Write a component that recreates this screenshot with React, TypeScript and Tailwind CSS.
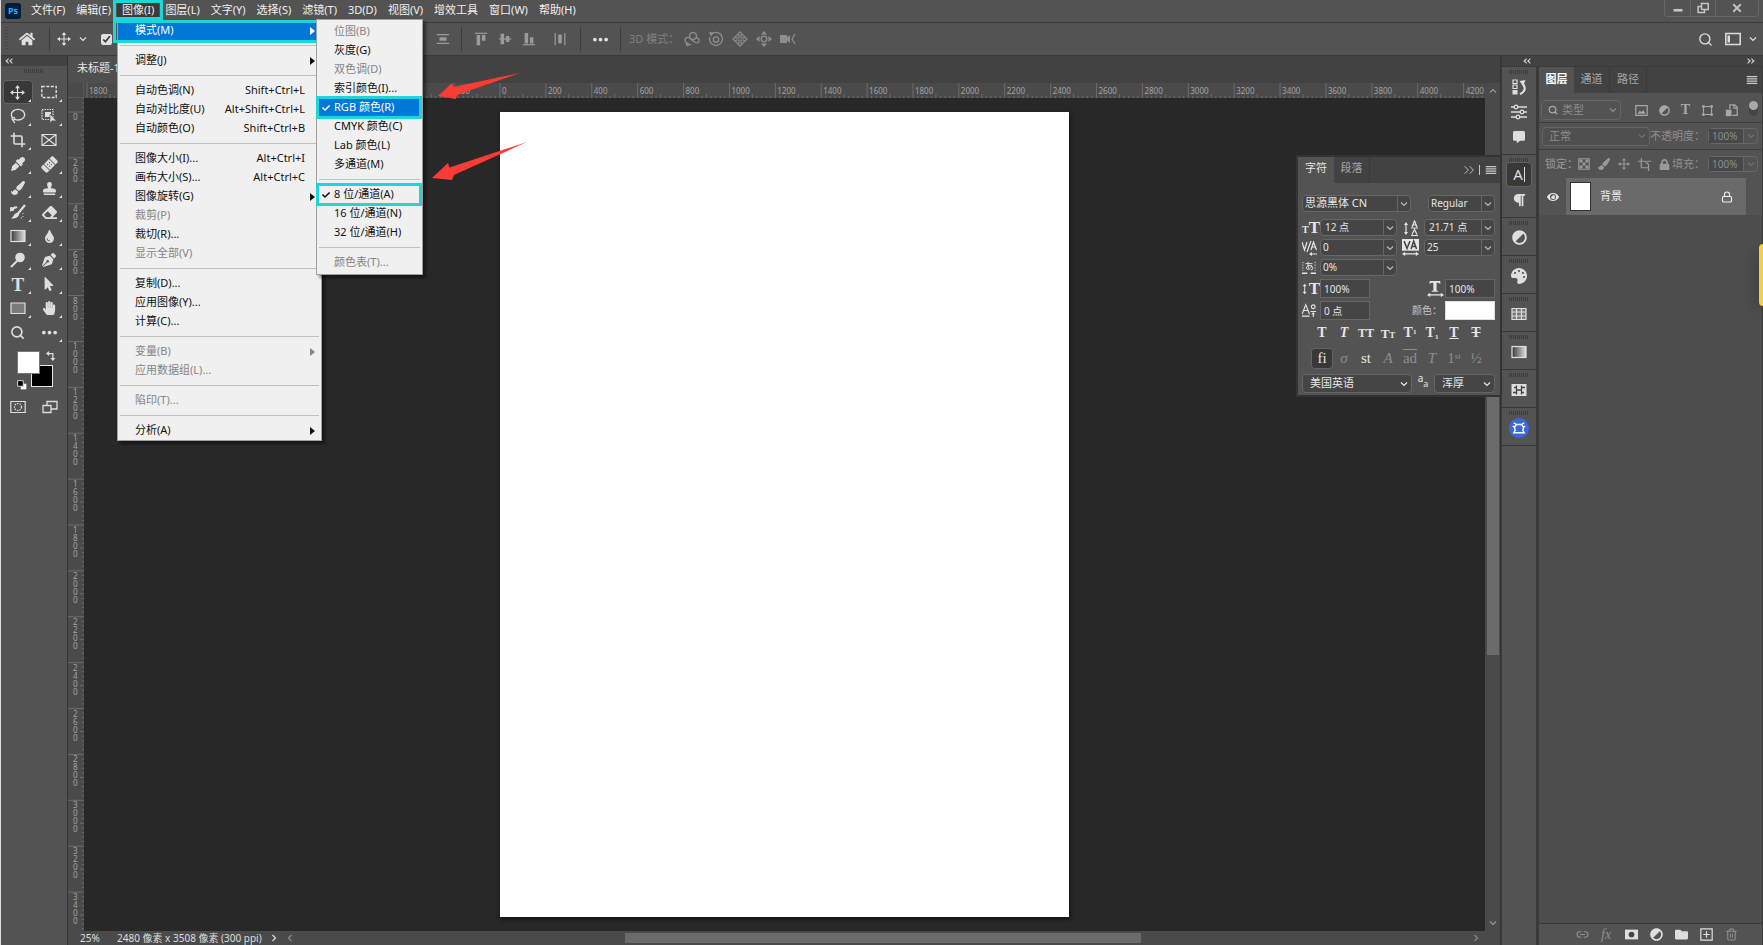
import type { ReactNode } from "react";
import {
  FaAdjust,
  FaBandAid,
  FaCheck,
  FaCommentAlt,
  FaEraser,
  FaEye,
  FaEyeDropper,
  FaFolder,
  FaHandPaper,
  FaHome,
  FaLock,
  FaMousePointer,
  FaPaintBrush,
  FaPalette,
  FaParagraph,
  FaPenNib,
  FaStamp,
  FaTint,
} from "react-icons/fa";
import { Crop, Lasso, Link2, Lock, Search, Trash2 } from "lucide-react";

type MenuEntry =
  | "-"
  | {
      label: string;
      keys?: string;
      disabled?: boolean;
      more?: boolean;
      checked?: boolean;
      active?: boolean;
      ringed?: boolean;
    };

const imageMenu: MenuEntry[] = [
  { label: "模式(M)", more: true, active: true, ringed: true },
  "-",
  { label: "调整(J)", more: true },
  "-",
  { label: "自动色调(N)", keys: "Shift+Ctrl+L" },
  { label: "自动对比度(U)", keys: "Alt+Shift+Ctrl+L" },
  { label: "自动颜色(O)", keys: "Shift+Ctrl+B" },
  "-",
  { label: "图像大小(I)...", keys: "Alt+Ctrl+I" },
  { label: "画布大小(S)...", keys: "Alt+Ctrl+C" },
  { label: "图像旋转(G)", more: true },
  { label: "裁剪(P)", disabled: true },
  { label: "裁切(R)..." },
  { label: "显示全部(V)", disabled: true },
  "-",
  { label: "复制(D)..." },
  { label: "应用图像(Y)..." },
  { label: "计算(C)..." },
  "-",
  { label: "变量(B)", more: true, disabled: true },
  { label: "应用数据组(L)...", disabled: true },
  "-",
  { label: "陷印(T)...", disabled: true },
  "-",
  { label: "分析(A)", more: true },
];

const modeMenu: MenuEntry[] = [
  { label: "位图(B)", disabled: true },
  { label: "灰度(G)" },
  { label: "双色调(D)", disabled: true },
  { label: "索引颜色(I)..." },
  { label: "RGB 颜色(R)", checked: true, active: true, ringed: true },
  { label: "CMYK 颜色(C)" },
  { label: "Lab 颜色(L)" },
  { label: "多通道(M)" },
  "-",
  { label: "8 位/通道(A)", checked: true, ringed: true },
  { label: "16 位/通道(N)" },
  { label: "32 位/通道(H)" },
  "-",
  { label: "颜色表(T)...", disabled: true },
];

function Svg({ children, className = "size-4" }: { children: ReactNode; className?: string }) {
  return (
    <svg viewBox="0 0 16 16" fill="none" stroke="currentColor" className={className} aria-hidden="true">
      {children}
    </svg>
  );
}

function Chevron({ className = "size-2" }: { className?: string }) {
  return (
    <Svg className={className}>
      <path d="M2 5l6 6 6-6" strokeWidth="2.4" />
    </Svg>
  );
}

function Burger() {
  return (
    <Svg className="size-3">
      <path d="M1 3.500h14M1 6.500h14M1 9.500h14M1 12.500h14" strokeWidth="1.4" />
    </Svg>
  );
}

function Grip() {
  return (
    <div className="mx-auto mt-[3px] h-1 w-5 bg-[repeating-linear-gradient(90deg,#3d3d3d_0_1px,transparent_1px_2px)]" />
  );
}

function MoveIcon({ className = "size-4" }: { className?: string }) {
  return (
    <Svg className={className}>
      <path d="M8 2v12M2 8h12" strokeWidth="1.3" />
      <path
        d="M8 0l2.6 3.4H5.4zM8 16l2.6-3.4H5.4zM0 8l3.4-2.6v5.2zM16 8l-3.4-2.6v5.2z"
        fill="currentColor"
        stroke="none"
      />
    </Svg>
  );
}

function GradientIcon({ id }: { id: string }) {
  return (
    <Svg>
      <defs>
        <linearGradient id={id}>
          <stop offset="0" stopColor="#3a3a3a" />
          <stop offset="1" stopColor="#e0e0e0" />
        </linearGradient>
      </defs>
      <rect x="1" y="2.5" width="14" height="11" fill={`url(#${id})`} strokeWidth="1.2" />
    </Svg>
  );
}

function Ring({ className = "" }: { className?: string }) {
  return <span className={"pointer-events-none absolute z-10 border-[3px] border-[#1fd5d8] " + className} />;
}

function MenuRow({ entry, sub }: { entry: MenuEntry; sub?: boolean }) {
  if (entry === "-") {
    return <li role="separator" className="mx-[2px] my-[5px] h-px bg-[#bfbfbf]" />;
  }
  const tone = entry.active ? "bg-[#0078d7] text-white" : entry.disabled ? "text-[#858585]" : "text-[#111]";
  return (
    <li className="relative">
      <button type="button" disabled={entry.disabled} className={"flex h-[19px] w-full items-center " + tone}>
        <span className="flex w-[17px] shrink-0 justify-center">
          {entry.checked ? <FaCheck className="size-2" /> : null}
        </span>
        <span className="whitespace-nowrap">{entry.label}</span>
        <span className="mr-[5px] ml-auto whitespace-nowrap">{entry.keys}</span>
        {sub ? null : (
          <span className="flex w-[11px] shrink-0">
            {entry.more ? (
              <svg viewBox="0 0 5 8" className="h-2 w-[5px] fill-current" aria-hidden="true">
                <path d="M0 0l5 4-5 4z" />
              </svg>
            ) : null}
          </span>
        )}
      </button>
      {entry.ringed ? (
        <Ring className={sub ? "-inset-y-[2px] right-0 -left-px" : "-top-px right-0 -bottom-[3px] -left-[5px]"} />
      ) : null}
    </li>
  );
}

function ImageMenu() {
  return (
    <>
      <ul className="absolute top-full left-0 z-20 w-[205px] border border-[#a0a0a0] bg-[#f0f0f0] text-[11px] shadow-[3px_3px_3px_rgba(0,0,0,0.45)]">
        {imageMenu.map((entry, i) => (
          <MenuRow key={i} entry={entry} />
        ))}
      </ul>
      <ul className="absolute top-[19px] left-[199px] z-30 w-[107px] border border-[#a0a0a0] bg-[#f0f0f0] py-[2px] text-[11px] shadow-[3px_3px_3px_rgba(0,0,0,0.45)]">
        {modeMenu.map((entry, i) => (
          <MenuRow key={i} entry={entry} sub />
        ))}
      </ul>
    </>
  );
}

const titles = [
  "文件(F)",
  "编辑(E)",
  "图像(I)",
  "图层(L)",
  "文字(Y)",
  "选择(S)",
  "滤镜(T)",
  "3D(D)",
  "视图(V)",
  "增效工具",
  "窗口(W)",
  "帮助(H)",
];

function MenuBar() {
  return (
    <header className="flex h-[23px] shrink-0 border-b border-[#3a3a3a]">
      <div className="mt-[3px] ml-1 flex size-4 items-center justify-center rounded-[3px] bg-[#001e36] text-[9px] font-bold text-[#31a8ff]">
        Ps
      </div>
      <nav className="ml-[5px] flex items-start gap-px">
        {titles.map((title) => {
          const open = title === "图像(I)";
          return (
            <div key={title} className="relative flex h-5">
              <button
                type="button"
                className={
                  "h-5 px-[5px] text-[11px] whitespace-nowrap text-[#f0f0f0] " + (open ? "bg-[#3a3a3a]" : "")
                }
              >
                {title}
              </button>
              {open ? <Ring className="inset-y-0 -right-[4px] -left-[4px]" /> : null}
              {open ? <ImageMenu /> : null}
            </div>
          );
        })}
      </nav>
      <div className="mr-1 ml-auto flex h-[17px] divide-x divide-[#666] rounded-b border border-t-0 border-[#666] text-[#c4c4c4]">
        <button type="button" aria-label="最小化" className="flex w-[26px] items-center justify-center">
          <Svg className="size-3">
            <path d="M2 11h12" strokeWidth="3.5" />
          </Svg>
        </button>
        <button type="button" aria-label="还原" className="flex w-[25px] items-center justify-center">
          <Svg className="size-3">
            <path d="M6 10V2h9v8H6M6 6H1.500v8H10v-4" strokeWidth="2" />
          </Svg>
        </button>
        <button type="button" aria-label="关闭" className="flex w-[42px] items-center justify-center">
          <Svg className="size-3">
            <path d="M3 3l10 10M13 3L3 13" strokeWidth="2.4" />
          </Svg>
        </button>
      </div>
    </header>
  );
}

function Divider() {
  return <span className="h-6 w-px bg-[#3d3d3d]" />;
}

function OptionsBar() {
  return (
    <div className="flex h-[33px] shrink-0 items-center border-b border-[#3a3a3a] text-[#9a9a9a]">
      <span className="mx-1 h-6 w-[3px] bg-[repeating-linear-gradient(#454545_0_1px,transparent_1px_3px)]" />
      <button type="button" aria-label="主页" className="ml-[7px] text-[#e0e0e0]">
        <FaHome className="size-4" />
      </button>
      <span className="ml-[14px]" />
      <Divider />
      <div className="flex w-[404px] items-center gap-2 pl-[7px] text-[#dedede]">
        <MoveIcon className="size-[14px]" />
        <Chevron />
        <input type="checkbox" defaultChecked aria-label="自动选择" className="ml-[6px] size-[11px] accent-[#e0e0e0]" />
      </div>
      <div className="-ml-[25px] flex w-[27px] justify-center">
        <Svg className="size-[14px]">
          <path d="M1 3h14M1 13h14" strokeWidth="1.4" />
          <path d="M4 6h8v4H4z" fill="currentColor" stroke="none" />
        </Svg>
      </div>
      <span className="ml-[5px]" />
      <Divider />
      <div className="ml-3 flex items-center gap-[10px]">
        <Svg className="size-[14px]">
          <path d="M1 1.500h14" strokeWidth="1.400" />
          <path d="M3 3.500h4V15H3zM9 3.500h4V10H9z" fill="currentColor" stroke="none" />
        </Svg>
        <Svg className="size-[14px]">
          <path d="M1 8h14" strokeWidth="1.400" />
          <path d="M3 2h4v12H3zM9 4.500h4v7H9z" fill="currentColor" stroke="none" />
        </Svg>
        <Svg className="size-[14px]">
          <path d="M1 14.500h14" strokeWidth="1.400" />
          <path d="M3 1h4v12H3zM9 6h4v7H9z" fill="currentColor" stroke="none" />
        </Svg>
      </div>
      <div className="mr-[13px] ml-[17px]">
        <Svg className="size-[14px]">
          <path d="M2.500 1v14M13.500 1v14" strokeWidth="1.400" />
          <path d="M6 3h4v10H6z" fill="currentColor" stroke="none" />
        </Svg>
      </div>
      <Divider />
      <button type="button" aria-label="更多对齐选项" className="mx-3 text-[#e0e0e0]">
        <Svg className="size-[15px]">
          <path
            d="M0 8a2 2 0 104 0 2 2 0 10-4 0M6 8a2 2 0 104 0 2 2 0 10-4 0M12 8a2 2 0 104 0 2 2 0 10-4 0"
            fill="currentColor"
            stroke="none"
          />
        </Svg>
      </button>
      <Divider />
      <span className="ml-2 text-[11px] whitespace-nowrap text-[#808080]">3D 模式：</span>
      <div className="ml-[5px] flex items-center gap-2 text-[#8e8e8e]">
        <Svg>
          <path d="M4 12.500a3.200 3.200 0 01-2-5.500c2-1.500 4 0 6 2s5 4 6.500 2-.5-4.500-3-4.500" strokeWidth="1.300" />
          <circle cx="9" cy="5" r="3.500" strokeWidth="1.300" />
          <path d="M2 11l6 3-6 1z" fill="currentColor" stroke="none" />
        </Svg>
        <Svg>
          <path d="M4.500 2.500A6.500 6.500 0 111.800 6" strokeWidth="1.300" />
          <circle cx="8" cy="8.500" r="2.700" strokeWidth="1.300" />
          <path d="M1 1l5 .5-3 4z" fill="currentColor" stroke="none" />
        </Svg>
        <Svg>
          <path
            d="M8 .8L11 4H9v3h3V5l3.200 3L12 11V9H9v3h2l-3 3.200L5 12h2V9H4v2L.8 8 4 5v2h3V4H5z"
            strokeWidth="1.100"
          />
        </Svg>
        <Svg>
          <circle cx="8" cy="8" r="2.800" strokeWidth="1.300" />
          <path
            d="M8 0l3 3.500H5zM8 16l3-3.500H5zM0 8l3.500-3v6zM16 8l-3.500-3v6z"
            fill="currentColor"
            stroke="none"
          />
        </Svg>
        <Svg>
          <path d="M0 4h7v2.500L10 4v8L7 9.500V12H0z" fill="currentColor" stroke="none" />
          <path d="M15 3l-3 5 3 5" strokeWidth="1.300" />
        </Svg>
      </div>
      <div className="mr-[6px] ml-auto flex items-center text-[#dedede]">
        <Search className="size-[15px]" strokeWidth={2.2} />
        <Svg className="mx-3 size-4">
          <path d="M.8 2.500h14.400v11H.8z" strokeWidth="1.500" />
          <path d="M2.500 4.500H5v7H2.500z" fill="currentColor" stroke="none" />
        </Svg>
        <Chevron className="-ml-1 size-2" />
      </div>
    </div>
  );
}

type Tool = { name: string; icon: ReactNode; plain?: boolean; active?: boolean };

const tools: Tool[] = [
  { name: "移动工具", active: true, icon: <MoveIcon className="size-[15px]" /> },
  {
    name: "矩形选框工具",
    icon: (
      <Svg>
        <path d="M.8 2.500h14.400v11H.8z" strokeWidth="1.400" strokeDasharray="3 1.500" />
      </Svg>
    ),
  },
  { name: "套索工具", icon: <Lasso className="size-4" strokeWidth={2} /> },
  {
    name: "对象选择工具",
    icon: (
      <Svg>
        <path d="M1 1.500h11v10H1z" strokeWidth="1.200" strokeDasharray="1.500 1" />
        <path d="M4 4h6v5H4z" fill="currentColor" stroke="none" />
        <path d="M9 6v9l2.300-2.200L15.500 13z" fill="currentColor" stroke="#535353" strokeWidth=".6" />
      </Svg>
    ),
  },
  { name: "裁剪工具", icon: <Crop className="size-4" strokeWidth={2.4} /> },
  {
    name: "图框工具",
    plain: true,
    icon: (
      <Svg>
        <path d="M1 2.500h14v11H1zM1 2.500l14 11M15 2.500l-14 11" strokeWidth="1.200" />
      </Svg>
    ),
  },
  { name: "吸管工具", icon: <FaEyeDropper className="size-[14px]" /> },
  { name: "污点修复画笔工具", icon: <FaBandAid className="size-[17px] -rotate-45" /> },
  { name: "画笔工具", icon: <FaPaintBrush className="size-[14px]" /> },
  { name: "仿制图章工具", icon: <FaStamp className="size-[13px]" /> },
  {
    name: "历史记录画笔工具",
    icon: (
      <Svg>
        <path d="M15 1L8 9.500M1 6c2-3 4-2 6-3" strokeWidth="2.200" />
        <path d="M9 9c1 4-4 6-8 5.500C4 13 4 8 9 9z" fill="currentColor" stroke="none" />
        <path d="M0 7l1-4 3 3zM13 9v1M13 12v1M11 14h1" fill="currentColor" strokeWidth="1" />
      </Svg>
    ),
  },
  { name: "橡皮擦工具", icon: <FaEraser className="size-[15px]" /> },
  { name: "渐变工具", icon: <GradientIcon id="tool-gradient" /> },
  { name: "模糊工具", icon: <FaTint className="size-[13px]" /> },
  {
    name: "减淡工具",
    icon: (
      <Svg>
        <circle cx="10" cy="5.500" r="4.800" fill="currentColor" stroke="none" />
        <path d="M7 9l-6 6" strokeWidth="2" />
      </Svg>
    ),
  },
  { name: "钢笔工具", icon: <FaPenNib className="size-[14px]" /> },
  { name: "横排文字工具", icon: <span className="font-['Liberation_Serif',serif] text-[19px] leading-none font-bold">T</span> },
  { name: "路径选择工具", icon: <FaMousePointer className="size-[14px]" /> },
  {
    name: "矩形工具",
    icon: (
      <Svg>
        <path d="M1 3h14v10.500H1z" fill="#7b7b7b" strokeWidth="1.200" />
      </Svg>
    ),
  },
  { name: "抓手工具", icon: <FaHandPaper className="size-[14px]" /> },
  { name: "缩放工具", plain: true, icon: <Search className="size-[15px]" strokeWidth={2.6} /> },
  {
    name: "编辑工具栏",
    icon: (
      <Svg className="size-[15px]">
        <path
          d="M0 8a2 2 0 104 0 2 2 0 10-4 0M6 8a2 2 0 104 0 2 2 0 10-4 0M12 8a2 2 0 104 0 2 2 0 10-4 0"
          fill="currentColor"
          stroke="none"
        />
      </Svg>
    ),
  },
];

function ToolBar() {
  return (
    <aside className="w-[66px] shrink-0 text-[#dedede]">
      <div className="flex h-[10px] items-center bg-[#424242] pl-1">
        <Collapse />
      </div>
      <Grip />
      <div className="mt-[7px] grid grid-cols-2 gap-x-[2px] pr-[3px] pl-[2px]">
        {tools.map((tool) => (
          <button
            key={tool.name}
            type="button"
            aria-label={tool.name}
            className={
              "relative flex h-6 items-center justify-center rounded-sm " +
              (tool.active ? "bg-[#383838] ring-1 ring-[#646464] ring-inset" : "")
            }
          >
            {tool.icon}
            {tool.plain ? null : (
              <svg viewBox="0 0 4 4" className="absolute right-[2px] bottom-[2px] size-[3px] fill-current">
                <path d="M4 0v4H0z" />
              </svg>
            )}
          </button>
        ))}
      </div>
      <div className="relative mt-[7px] ml-4 h-[44px] w-[44px]">
        <button
          type="button"
          aria-label="背景色"
          className="absolute top-[14px] left-[14px] size-[22px] border border-[#e8e8e8] bg-black"
        />
        <button
          type="button"
          aria-label="前景色"
          className="absolute top-0 left-0 size-[23px] border border-[#777] bg-white"
        />
        <Svg className="absolute top-0 left-[29px] size-[10px]">
          <path d="M3 4h8v9" strokeWidth="2" />
          <path d="M0 4l5-4v8zM11 16l-4-5h8z" fill="currentColor" stroke="none" />
        </Svg>
        <Svg className="absolute top-[29px] left-0 size-[10px]">
          <path d="M6 6h9v9H6z" fill="#fff" stroke="none" />
          <path d="M1 1h9v9H1z" fill="#000" strokeWidth="1.500" />
        </Svg>
      </div>
      <div className="mt-1 flex pl-px">
        <button type="button" aria-label="快速蒙版" className="flex w-8 justify-center">
          <Svg>
            <path d="M.8 2.500h14.400v11H.8z" strokeWidth="1.200" />
            <circle cx="8" cy="8" r="3.500" strokeWidth="1.200" strokeDasharray="1.500 1" />
          </Svg>
        </button>
        <button type="button" aria-label="屏幕模式" className="flex w-8 justify-center">
          <Svg>
            <path d="M5 2.500h10v7.500H5z" strokeWidth="1.300" />
            <path d="M1 6.500h8v7H1z" fill="#535353" strokeWidth="1.300" />
          </Svg>
        </button>
      </div>
    </aside>
  );
}

function Collapse({ right }: { right?: boolean }) {
  return (
    <svg
      viewBox="0 0 10 8"
      className={"h-[6px] w-2 fill-[#d0d0d0] " + (right ? "-scale-x-100" : "")}
      aria-hidden="true"
    >
      <path d="M4.500 0L0 4l4.500 4V6L2.500 4l2-2zM9.500 0L5 4l4.500 4V6l-2-2 2-2z" />
    </svg>
  );
}

// 25% zoom: 200 document pixels cover this many screen pixels
const STEP = 569 / 12.4;

const horizontalMarks = Array.from({ length: 31 }, (_, i) => i - 9);
const verticalMarks = Array.from({ length: 19 }, (_, i) => i - 1);
const minor = [1, 2, 3, 4, 5, 6, 7, 8, 9];

// marks -8 to -2 sit under the open menu, so they carry no number
const numbered = (n: number) => n === -9 || (n > -2 && n < 22);

function HorizontalRuler() {
  return (
    <div className="flex h-[15px] flex-1 justify-center overflow-hidden">
      <svg viewBox="0 0 569 15" className="h-[15px] w-[569px] shrink-0 overflow-visible" aria-hidden="true">
        {horizontalMarks.map((n) => (
          <g key={n} stroke="#6c6c6c">
            <path d={`M${n * STEP} 0v15`} />
            {minor.map((m) => (
              <path key={m} d={`M${(n + m / 10) * STEP} ${m === 5 ? 11 : 13}V15`} />
            ))}
            {numbered(n) ? (
              <text x={n * STEP + 2} y="11" fill="#a3a3a3" stroke="none" fontSize="8">
                {Math.abs(n * 200)}
              </text>
            ) : null}
          </g>
        ))}
      </svg>
    </div>
  );
}

function VerticalRuler() {
  return (
    <div className="flex w-4 shrink-0 flex-col justify-center overflow-hidden">
      <svg viewBox="0 0 16 805" className="h-[805px] w-4 shrink-0 overflow-visible" aria-hidden="true">
        {verticalMarks.map((n) => (
          <g key={n} stroke="#6c6c6c">
            {n < 0 ? null : <path d={`M0 ${n * STEP}h16`} />}
            {minor.map((m) => (
              <path key={m} d={`M${m === 5 ? 12 : 14} ${(n + m / 10) * STEP}H16`} />
            ))}
            {n < 0
              ? null
              : [...String(n * 200)].map((digit, i) => (
                  <text key={i} x="5" y={n * STEP + 8 + i * 8} fill="#a3a3a3" stroke="none" fontSize="8">
                    {digit}
                  </text>
                ))}
          </g>
        ))}
      </svg>
    </div>
  );
}

function Picker({ label, value, className = "" }: { label: string; value: string; className?: string }) {
  return (
    <span className={"relative flex rounded-sm border border-[#666] bg-[#454545] " + className}>
      <select aria-label={label} defaultValue={value} className="w-full appearance-none truncate pr-3 outline-none">
        <option>{value}</option>
      </select>
      <Chevron className="pointer-events-none absolute top-1/2 right-[3px] size-2 -translate-y-1/2" />
    </span>
  );
}

function Combo({ label, value, className = "" }: { label: string; value: string; className?: string }) {
  return (
    <span className={"flex h-[17px] min-w-0 rounded-sm border border-[#666] bg-[#454545] " + className}>
      <input aria-label={label} defaultValue={value} className="w-0 min-w-0 flex-1 pl-1 outline-none" />
      <button
        type="button"
        aria-label={label + "列表"}
        className="flex w-[13px] items-center justify-center border-l border-[#666] text-[#b8b8b8]"
      >
        <Chevron />
      </button>
    </span>
  );
}

function Field({ label, value }: { label: string; value: string }) {
  return (
    <input
      aria-label={label}
      defaultValue={value}
      className="h-[19px] w-[50px] border border-[#666] bg-[#454545] pl-[3px] outline-none"
    />
  );
}

const serif = "font-['Liberation_Serif',serif]";

function CharacterPanel() {
  return (
    <section className="absolute top-[101px] right-0 z-10 w-[202px] bg-[#535353] pb-[2px] text-[10px] text-[#e6e6e6] shadow-[0_0_0_2px_#333]">
      <div className="flex h-[26px] bg-[#424242] text-[11px]">
        <button type="button" className="w-9 bg-[#535353] pb-1">
          字符
        </button>
        <button type="button" className="w-9 border-r border-[#3a3a3a] pb-1 text-[#a8a8a8]">
          段落
        </button>
        <div className="mr-[3px] ml-auto flex items-center gap-[5px] text-[#c8c8c8]">
          <Svg className="size-[10px]">
            <path d="M1 2l6 6-6 6M9 2l6 6-6 6" strokeWidth="1.500" />
          </Svg>
          <span className="h-[10px] w-px bg-[#c8c8c8]" />
          <Burger />
        </div>
      </div>
      <div className="pt-3 pr-[5px] pl-1">
        <div className="mb-[7px] flex justify-between">
          <Combo label="字体" value="思源黑体 CN" className="w-[109px] text-[11px] [&>input]:pl-[2px]" />
          <Combo label="字体样式" value="Regular" className="w-[67px] [&>input]:pl-[2px]" />
        </div>
        <div className="grid grid-cols-[18px_77px_27px_71px] items-center gap-y-[3px]">
          <span className={"leading-none font-bold " + serif}>
            <span className="text-[10px]">T</span>
            <span className="text-[17px]">T</span>
          </span>
          <Combo label="字体大小" value="12 点" />
          <span className="flex items-center justify-center">
            <Svg className="size-4">
              <path d="M3 4v9M8 8h7M8 15.500h7M9 7l2.500-6L14 7M10 5h3M9 14.500l2.500-5 2.500 5" strokeWidth="1.200" />
              <path d="M3 2l2 3H1zM3 15l2-3H1z" fill="currentColor" stroke="none" />
            </Svg>
          </span>
          <Combo label="行距" value="21.71 点" />
          <Svg className="size-4">
            <path d="M0 2l2.500 8L5 2M9 1L5 12M9 10l2.500-8L14.500 10M10 7h4M8 14h7" strokeWidth="1.200" />
            <path d="M7 14l3-2v4z" fill="currentColor" stroke="none" />
          </Svg>
          <Combo label="字距微调" value="0" className="[&>input]:pl-[2px]" />
          <span className="flex justify-center">
            <Svg className="size-[17px]">
              <path d="M0 0h16v11H0z" fill="currentColor" stroke="none" />
              <path d="M2 2l2.700 7L7.500 2M8.500 9.500L11 2l2.700 7.500M9.500 7h3.500" stroke="#444" strokeWidth="1.400" />
              <path d="M2 14h12" strokeWidth="1.200" />
              <path d="M0 14l3-2v4zM16 14l-3-2v4z" fill="currentColor" stroke="none" />
            </Svg>
          </span>
          <Combo label="字距" value="25" className="[&>input]:pl-[2px]" />
          <span className="flex">
            <Svg className="size-[14px]">
              <path d="M1 1v10M15 1v10" strokeWidth="1" strokeDasharray="1.500 1.500" />
              <path d="M4 3h8M7 1c-.5 4 0 6 1 8M11 5c-1 5-6 6-6 3s6-4 7-1-1 3-2 3" strokeWidth="1.100" />
              <path d="M0 14h6M10 14h6" strokeWidth="1.500" />
            </Svg>
          </span>
          <Combo label="比例间距" value="0%" className="[&>input]:pl-[2px]" />
        </div>
        <div className="mt-[3px] flex items-center">
          <span className={"flex w-[18px] items-center text-[17px] leading-none font-bold " + serif}>
            <Svg className="-mr-[4px] size-3">
              <path d="M4 3v10" strokeWidth="1.400" />
              <path d="M4 0l3 4H1zM4 16l3-4H1z" fill="currentColor" stroke="none" />
            </Svg>
            T
          </span>
          <Field label="垂直缩放" value="100%" />
          <Svg className="mr-px ml-auto size-[17px]">
            <path d="M2.500 1h10v3l-1.500-1.500H9V10h1.500v1h-6v-1H6V2.500H4L2.500 4z" fill="currentColor" stroke="none" />
            <path d="M2 14h12" strokeWidth="1.200" />
            <path d="M0 14l3-2v4zM16 14l-3-2v4z" fill="currentColor" stroke="none" />
          </Svg>
          <Field label="水平缩放" value="100%" />
        </div>
        <div className="mt-[3px] flex items-center">
          <Svg className="mr-[3px] size-[15px]">
            <path d="M0 12L4 2l4 10M1.500 8h5M0 14h8M9 9h6M12 10v5" strokeWidth="1.200" />
            <circle cx="12" cy="4" r="2" strokeWidth="1.200" />
            <path d="M12 10l2 2h-4z" fill="currentColor" stroke="none" />
          </Svg>
          <Field label="基线偏移" value="0 点" />
          <span className="mr-[3px] ml-auto text-[#c8c8c8]">颜色：</span>
          <button type="button" aria-label="文字颜色" className="h-[19px] w-[50px] border border-[#ddd] bg-white" />
        </div>
        <div className={"mt-[3px] grid h-5 grid-cols-8 items-center pr-2 pl-[9px] text-center text-[14px] leading-none font-bold " + serif}>
          <button type="button">T</button>
          <button type="button" className="italic">T</button>
          <button type="button" className="text-[12px]">TT</button>
          <button type="button" className="text-[13px]">T<small className="text-[9px]">T</small></button>
          <button type="button">T<sup className="text-[7px]">1</sup></button>
          <button type="button">T<sub className="text-[7px]">1</sub></button>
          <button type="button" className="underline">T</button>
          <button type="button" className="line-through">T</button>
        </div>
        <div className={"mt-[5px] grid h-[21px] grid-cols-8 items-stretch pr-2 pl-[9px] text-center text-[15px] leading-none text-[#8e8e8e] " + serif}>
          <button type="button" className="rounded-sm bg-[#383838] text-[#e6e6e6] ring-1 ring-[#646464] ring-inset">
            fi
          </button>
          <button type="button" className="italic">σ</button>
          <button type="button" className="text-[#e6e6e6]">st</button>
          <button type="button" className="italic">A</button>
          <button type="button" className="overline">ad</button>
          <button type="button" className="italic">T</button>
          <button type="button">1<sup className="text-[9px]">st</sup></button>
          <button type="button">½</button>
        </div>
        <div className="mt-[5px] flex items-center text-[11px]">
          <Picker label="语言" value="美国英语" className="h-[19px] w-[110px] pl-[7px]" />
          <span className="flex-1 text-center text-[9px]">
            <sup className="text-[10px]">a</sup>a
          </span>
          <Picker label="消除锯齿" value="浑厚" className="h-[19px] w-[61px] pl-[7px]" />
        </div>
      </div>
    </section>
  );
}

// callout arrows pointing at the colour mode and the bit depth
function Arrows() {
  return (
    <svg
      viewBox="0 0 100 115"
      className="pointer-events-none absolute top-[14px] left-[360px] z-10 h-[115px] w-[100px] fill-[#fb3b36]"
      aria-hidden="true"
    >
      <path d="M10 26L24 13l1.500 4L92 3 30 24.500 27.500 29z" />
      <path d="M4 108L20 93l1.500 4.500L99 72 26 105l-2 5z" />
    </svg>
  );
}

function DocumentArea() {
  return (
    <main className="relative flex min-w-0 flex-1 flex-col border-x border-[#333] bg-[#4a4a4a]">
      <div className="flex h-[27px] shrink-0 bg-[#424242]">
        <button
          type="button"
          className="flex w-[160px] items-center border-r border-[#3a3a3a] bg-[#4f4f4f] pb-[2px] pl-[9px] text-[11px] text-[#e6e6e6]"
        >
          未标题-1
        </button>
      </div>
      <div className="flex min-h-0 flex-1">
        <div className="flex min-w-0 flex-1 flex-col">
          <div className="flex shrink-0">
            <span className="w-4 border-r border-b border-dotted border-[#666]" />
            <HorizontalRuler />
          </div>
          <div className="flex min-h-0 flex-1">
            <VerticalRuler />
            <div className="flex min-w-0 flex-1 items-center justify-center overflow-hidden bg-[#282828]">
              <div className="aspect-[2480/3508] h-[calc(100%-28px)] bg-white shadow-[1px_2px_4px_#111]" />
            </div>
          </div>
        </div>
        <div className="flex w-[15px] shrink-0 flex-col items-center py-1 text-[#999]">
          <Chevron className="size-2 rotate-180" />
          <div className="flex flex-1 flex-col justify-center">
            <div className="h-[36%] w-3 bg-[#6b6b6b]" />
          </div>
          <Chevron className="size-2" />
        </div>
      </div>
      <footer className="flex h-[14px] shrink-0 items-center text-[10px] leading-none text-[#dedede]">
        <span className="w-[43px] pl-3">25%</span>
        <span className="ml-[6px] flex items-center gap-2 whitespace-nowrap">
          2480 像素 x 3508 像素 (300 ppi)
          <Chevron className="size-2 -rotate-90" />
        </span>
        <Chevron className="ml-2 size-2 rotate-90 text-[#888]" />
        <div className="flex h-full flex-1 px-[2px] py-[2px]">
          <div className="ml-[28%] w-[44%] bg-[#6b6b6b]" />
        </div>
        <Chevron className="mr-5 size-2 -rotate-90 text-[#888]" />
      </footer>
      <CharacterPanel />
      <Arrows />
    </main>
  );
}

type DockButton = { name: string; icon: ReactNode; active?: boolean };

const dock: DockButton[][] = [
  [
    {
      name: "历史记录",
      icon: (
        <Svg>
          <path d="M2 1h4v3.500H2zM2 6h4v3.500H2z" strokeWidth="1.200" />
          <path d="M1.500 11H6.500v4.500h-5z" fill="currentColor" stroke="none" />
          <path d="M9 15c5-2 6-6 3-10" strokeWidth="2.200" />
          <path d="M8.500 2l6-1-2.500 6z" fill="currentColor" stroke="none" />
        </Svg>
      ),
    },
    {
      name: "属性",
      icon: (
        <Svg>
          <path d="M0 3h3M7 3h9M0 8h9M13 8h3M0 13h5M9 13h7" strokeWidth="1.500" />
          <circle cx="5" cy="3" r="1.800" strokeWidth="1.300" />
          <circle cx="11" cy="8" r="1.800" strokeWidth="1.300" />
          <circle cx="7" cy="13" r="1.800" strokeWidth="1.300" />
        </Svg>
      ),
    },
    { name: "注释", icon: <FaCommentAlt className="size-3" /> },
  ],
  [
    {
      name: "字符",
      active: true,
      icon: <span className="border-r border-[#dedede] pr-px text-[15px] leading-none">A</span>,
    },
    { name: "段落", icon: <FaParagraph className="size-[14px]" /> },
  ],
  [{ name: "调整", icon: <HalfCircle className="size-[15px]" /> }],
  [{ name: "颜色", icon: <FaPalette className="size-4 -scale-x-100" /> }],
  [
    {
      name: "色板",
      icon: (
        <Svg>
          <path d="M1 2.500h14v11H1z" fill="#777" strokeWidth="1.200" />
          <path d="M1 6h14M1 10h14M5.500 2.500v11M10.500 2.500v11" strokeWidth="1.200" />
        </Svg>
      ),
    },
  ],
  [{ name: "渐变", icon: <GradientIcon id="dock-gradient" /> }],
  [
    {
      name: "图案",
      icon: (
        <Svg>
          <path d="M.5 2h15v12H.5z" fill="currentColor" stroke="none" />
          <path
            d="M3 5.500h3M5.500 3.500v9M2 10.500h4M5.500 8h5M10.500 3.500v9M10.500 5.500H14M10.500 10.500H13"
            stroke="#444"
            strokeWidth="1.300"
          />
        </Svg>
      ),
    },
  ],
  [
    {
      name: "插件",
      icon: (
        <span className="flex size-5 items-center justify-center rounded-full bg-[#3a66e0] text-white">
          <Svg className="size-[14px]">
            <path
              d="M5 4h6l2 3-.5 4 1.500 2.500H2L3.500 11 3 7zM5 4L2 2M11 4l3-2M3 7L.8 6M13 7l2.200-1"
              strokeWidth="1.600"
            />
          </Svg>
        </span>
      ),
    },
  ],
];

function HalfCircle({ className = "size-3" }: { className?: string }) {
  return <FaAdjust className={className + " rotate-45"} />;
}

function Dock() {
  return (
    <div className="w-[34px] shrink-0 bg-[#535353] text-[#dedede]">
      {dock.map((group, i) => (
        <div key={i} className="border-b border-[#383838] pb-[5px]">
          <Grip />
          {group.map((item) => (
            <button
              key={item.name}
              type="button"
              aria-label={item.name}
              className={
                "mx-auto flex h-[25px] w-[26px] items-center justify-center " +
                (item.active ? "rounded-sm bg-[#383838] ring-1 ring-[#646464] ring-inset" : "")
              }
            >
              {item.icon}
            </button>
          ))}
        </div>
      ))}
    </div>
  );
}

function Percent({ label }: { label: string }) {
  return (
    <label className="ml-auto flex items-center gap-[3px] text-[11px] whitespace-nowrap text-[#8e8e8e]">
      {label}：
      <span className="flex h-4 w-[50px] rounded-sm border border-[#666] text-[10px]">
        <input defaultValue="100%" disabled className="w-0 min-w-0 flex-1 bg-[#484848] pl-[3px]" />
        <span className="flex w-[14px] items-center justify-center border-l border-[#666] text-[#707070]">
          <Chevron />
        </span>
      </span>
    </label>
  );
}

function LayersPanel() {
  return (
    <section className="flex min-w-0 flex-1 flex-col bg-[#4d4d4d] text-[11px] text-[#a8a8a8]">
      <div className="flex h-[26px] shrink-0 bg-[#424242]">
        <button type="button" className="w-[35px] bg-[#535353] pb-[2px] font-bold text-white">
          图层
        </button>
        <button type="button" className="w-9 border-r border-[#3a3a3a] pb-[2px]">
          通道
        </button>
        <button type="button" className="w-[37px] border-r border-[#3a3a3a] pb-[2px]">
          路径
        </button>
        <span className="mr-1 ml-auto flex items-center text-[#c8c8c8]">
          <Burger />
        </span>
      </div>
      <div className="flex h-[30px] items-center border-b border-[#3d3d3d] bg-[#535353] pt-[5px] pr-1 pl-[2px]">
        <span className="flex h-5 w-[80px] items-center rounded-sm border border-[#666] pl-[6px]">
          <Search className="size-[10px] shrink-0" strokeWidth={3} />
          <Picker label="图层过滤" value="类型" className="h-4 flex-1 border-0 bg-transparent! pl-1 text-[#8e8e8e]" />
        </span>
        <div className="ml-[14px] flex flex-1 items-center justify-between">
          <Svg className="size-[13px]">
            <path d="M1 2h14v12H1z" strokeWidth="1.500" />
            <path d="M3 12l3-4 2 2 2-3 3 5z" fill="currentColor" stroke="none" />
          </Svg>
          <HalfCircle className="size-[11px]" />
          <span className={"text-[14px] leading-none font-bold " + serif}>T</span>
          <Svg className="size-[13px]">
            <path d="M3 3h10v10H3z" strokeWidth="1.300" />
            <path d="M2 2h2v2H2zM12 2h2v2h-2zM2 12h2v2H2zM12 12h2v2h-2z" fill="currentColor" strokeWidth="1.200" />
          </Svg>
          <Svg className="size-[13px]">
            <path d="M6 6V1h6l3 3v10H9M11 1v4h4" strokeWidth="1.500" />
            <path d="M1 7h7v8H1z" fill="currentColor" stroke="none" />
          </Svg>
          <span className="mb-1 flex h-[15px] w-[9px] rounded-full bg-[#454545]">
            <span className="size-[9px] rounded-full bg-[#a8a8a8]" />
          </span>
        </div>
      </div>
      <div className="flex h-[27px] items-center border-b border-[#3d3d3d] bg-[#535353] pr-1 pl-[3px]">
        <Picker
          label="混合模式"
          value="正常"
          className="h-[19px] w-[108px] bg-[#4f4f4f]! pl-[6px] text-[#8e8e8e] [&>svg]:text-[#707070]"
        />
        <Percent label="不透明度" />
      </div>
      <div className="flex h-7 items-center bg-[#535353] pr-1 pl-[6px] text-[#9a9a9a]">
        锁定：
        <div className="flex items-center gap-2">
          <Svg className="size-3">
            <path d="M1 1h14v14H1z" strokeWidth="1.500" />
            <path d="M2 2h4v4H2zM10 2h4v4h-4zM6 6h4v4H6zM2 10h4v4H2zM10 10h4v4h-4z" fill="currentColor" stroke="none" />
          </Svg>
          <FaPaintBrush className="size-3" />
          <MoveIcon className="size-3" />
          <Svg className="size-[13px]">
            <path d="M4 0v12h9M0 4h9l4 4v8M11 4h5" strokeWidth="1.500" />
          </Svg>
          <FaLock className="size-[11px]" />
        </div>
        <Percent label="填充" />
      </div>
      <div className="flex h-[37px] items-center bg-[#535353]">
        <span className="flex w-[27px] justify-center text-[#e6e6e6]">
          <FaEye className="size-3" />
        </span>
        <div className="mr-4 flex h-full flex-1 items-center bg-[#6a6a6a] pr-[13px] pl-1 text-[#f0f0f0]">
          <span className="h-[29px] w-[21px] border border-[#333] bg-white" />
          <span className="ml-[9px] flex-1">背景</span>
          <Lock className="size-3" strokeWidth={2.2} />
        </div>
      </div>
      <div className="mt-auto flex h-[22px] items-center justify-center gap-3 border-t border-[#3a3a3a] bg-[#535353] pl-[13px] text-[#dedede]">
        <Link2 className="size-[13px] text-[#8e8e8e]" />
        <span className={"w-3 text-[14px] leading-none text-[#8e8e8e] italic " + serif}>fx</span>
        <Svg className="size-[13px]">
          <path d="M0 2h16v12H0z" fill="currentColor" stroke="none" />
          <circle cx="8" cy="8" r="3.500" fill="#444" stroke="none" />
        </Svg>
        <HalfCircle className="size-[13px]" />
        <FaFolder className="size-[13px]" />
        <Svg className="size-[13px]">
          <path d="M1 1h14v14H1zM8 4v8M4 8h8" strokeWidth="1.500" />
        </Svg>
        <Trash2 className="size-[13px] text-[#8e8e8e]" />
      </div>
    </section>
  );
}

export default function App() {
  return (
    <div className="relative flex h-screen flex-col overflow-hidden border-l border-[#dcdcdc] bg-[#535353] font-['Noto_Sans','Noto_Sans_CJK_SC',sans-serif]">
      <MenuBar />
      <OptionsBar />
      <div className="flex min-h-0 flex-1">
        <ToolBar />
        <DocumentArea />
        <aside className="flex w-[262px] shrink-0 flex-col bg-[#3a3a3a] pl-px">
          <div className="mb-px flex h-[10px] shrink-0 items-center justify-between bg-[#424242] pr-2 pl-[21px]">
            <Collapse />
            <Collapse right />
          </div>
          <div className="flex min-h-0 flex-1 gap-[3px] pr-px">
            <Dock />
            <LayersPanel />
          </div>
        </aside>
      </div>
      <span className="absolute top-[244px] right-0 h-[62px] w-1 rounded-l bg-[#f2cf4a] shadow-[-3px_4px_12px_rgba(0,0,0,0.3)]" />
    </div>
  );
}
